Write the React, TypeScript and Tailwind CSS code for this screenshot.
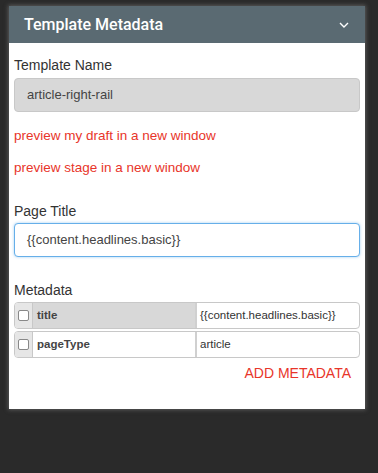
import React from "react";

export default function App() {
  const font = { fontFamily: '"Liberation Sans", Arial, sans-serif' };
  return (
    <div className="w-[378px] h-[473px] bg-[#2a2a2a] pt-[6px] pl-[9px]" style={font}>
      <div className="w-[356px] bg-white shadow-[0_0_4px_1px_rgba(110,110,110,0.7)]">
        <div className="h-[37px] bg-[#5a6a72] flex items-center justify-between pl-[15px] pr-[16px]">
          <span
            className="text-white text-[16px] font-medium"
            style={{ fontFamily: 'Roboto, "Liberation Sans", sans-serif' }}
          >
            Template Metadata
          </span>
          <svg width="10" height="6" viewBox="0 0 10 6" fill="none">
            <path d="M1 1l4 4 4-4" stroke="white" strokeWidth="1.4" />
          </svg>
        </div>
        <div className="px-[5px] pt-[13px] pb-[26px]">
          <div className="text-[14px] leading-[18px] text-[#333]">Template Name</div>
          <div className="mt-[4px] h-[34px] rounded-[4px] border border-[#c8c8c8] bg-[#d8d8d8] flex items-center pl-[12px] text-[13px] text-[#444]">
            article-right-rail
          </div>
          <div className="mt-[16px] text-[13.5px] leading-[16px] text-[#e8352a]">preview my draft in a new window</div>
          <div className="mt-[16px] text-[13.5px] leading-[16px] text-[#e8352a]">preview stage in a new window</div>
          <div className="mt-[26px] text-[14px] leading-[18px] text-[#333]">Page Title</div>
          <div className="mt-[3px] h-[34px] rounded-[4px] border border-[#66afe9] shadow-[0_0_3px_rgba(102,175,233,0.6)] bg-white flex items-center pl-[12px] text-[13px] text-[#444]">
            {"{{content.headlines.basic}}"}
          </div>
          <div className="mt-[24px] text-[14px] leading-[18px] text-[#333]">Metadata</div>
          <div className="mt-[3px] flex flex-col gap-[2px]">
            {[
              { k: "title", v: "{{content.headlines.basic}}", bg: "bg-[#d8d8d8]" },
              { k: "pageType", v: "article", bg: "bg-white" },
            ].map((r) => (
              <div key={r.k} className="h-[27px] flex rounded-[4px] border border-[#c8c8c8] overflow-hidden">
                <div className="w-[18px] bg-[#e6e6e6] border-r border-[#c8c8c8] flex items-center justify-center">
                  <div className="w-[11px] h-[11px] border border-[#888] rounded-[2px] bg-white" />
                </div>
                <div className={`w-[164px] ${r.bg} border-r-2 border-[#d0d0d0] flex items-center pl-[4px] text-[11.5px] font-bold text-[#444]`}>
                  {r.k}
                </div>
                <div className="flex-1 flex items-center pl-[3px] text-[11.5px] text-[#333]">{r.v}</div>
              </div>
            ))}
          </div>
          <div className="mt-[5px] flex justify-end pr-[9px]">
            <span className="text-[14px] leading-[20px] text-[#e8352a]">ADD METADATA</span>
          </div>
        </div>
      </div>
    </div>
  );
}
